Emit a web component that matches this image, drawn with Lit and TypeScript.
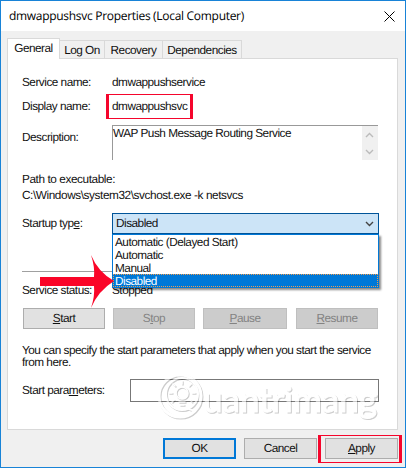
import { LitElement, html, css, svg } from "lit";
import { customElement } from "lit/decorators.js";

@customElement("app-root")
export class AppRoot extends LitElement {
  static styles = css`
    :host { display: block; width: 406px; height: 468px; }
    * { box-sizing: border-box; }
    .window { position: relative; width: 406px; height: 468px; overflow: hidden; display: flex; flex-direction: column;
      border: 1px solid #1883d7; background: #f0f0f0; color: #111;
      font: 11.8px/13px "Liberation Sans", Arial, sans-serif; letter-spacing: -0.5px; text-rendering: geometricPrecision; white-space: nowrap; }
    .title { height: 30px; flex: none; background: #fff; display: flex; justify-content: space-between; align-items: center;
      padding: 0 10px 0 8px; font: 12px/16px "Open Sans", "Noto Sans", sans-serif; letter-spacing: -0.3px; color: #000; }
    .title svg { display: block; }
    .tabs { height: 28px; flex: none; display: flex; align-items: flex-end; padding-left: 6px; margin-bottom: -1px; position: relative; }
    .tab { height: 18px; border: 1px solid #d9d9d9; border-left: 0; border-bottom: 0; text-align: center; line-height: 18px; margin-bottom: 1px; }
    .active { width: 53px; height: 21px; margin: 0; background: #fff; border-left: 1px solid #d9d9d9; line-height: 19px; }
    .logon { width: 45px; } .recovery { width: 58px; } .deps { width: 79px; }
    .pane { margin-left: 6px; width: 391px; height: 372px; flex: none; border: 1px solid #d9d9d9; background: #fff; padding: 11px 14px 0; }
    .row { display: flex; align-items: center; }
    .label { width: 90px; flex: none; }
    .name { height: 24px; }
    .marked { position: relative; }
    .mark { position: absolute; border: solid #f5052c; border-width: 1px 3px; pointer-events: none; }
    .mark-name { left: -6px; top: -6px; width: 87px; height: 25px; }
    .desc { height: 35px; margin-top: 7px; }
    .desc .label { align-self: flex-start; margin-top: 6px; }
    .memo { width: 266px; height: 35px; display: flex; justify-content: space-between; border: solid #999; border-width: 1px 0 0 1px; }
    .memo span { padding-top: 1px; }
    .scroll { width: 16px; background: #f0f0f0; }
    .path { margin-top: 11px; line-height: 16px; letter-spacing: -0.42px; }
    .startup { height: 21px; margin-top: 10px; }
    .combo { position: relative; width: 267px; height: 21px; border: 1px solid #005499; background: #cce4f7; display: flex; align-items: center; justify-content: space-between; padding: 0 4px 0 3px; }
    .list { position: absolute; z-index: 2; left: -1px; top: 20px; width: 267px; height: 54px; background: #fff; border: 1px solid #0078d7; box-shadow: 2px 2px 2px #0007; }
    .item { height: 13px; padding-left: 2px; line-height: 14px; }
    .selected { background: #0078d7; color: #fff; outline: 1px dotted #f09b4c; outline-offset: -1px; }
    .rule { height: 1px; background: #a0a0a0; width: 356px; margin-top: 37px; }
    .status { height: 13px; margin-top: 12px; }
    .buttons { display: flex; margin: 11px 0 0 1px; gap: 8px; }
    .btn { height: 21px; width: 82px; display: flex; align-items: center; justify-content: center; background: #e1e1e1; border: 1px solid #adadad; }
    .off { background: #ccc; border-color: #bfbfbf; color: #838383; }
    .pause { width: 84px; } .resume { margin-left: 1px; }
    .help { margin-top: 15px; line-height: 12px; }
    .params { height: 23px; margin-top: 11px; }
    .params .label { width: 108px; }
    .input { width: 249px; height: 23px; border: 1px solid #777; }
    .footer { display: flex; justify-content: flex-end; gap: 8px; padding: 8px 7px 0 0; }
    .footer .btn { width: 73px; position: relative; }
    .footer .ok { border: 2px solid #0078d7; }
    .mark-apply { left: -8px; top: -4px; width: 84px; height: 28px; }
    .arrow { position: absolute; z-index: 3; left: 39px; top: 254px; }
    .water { position: absolute; left: 149px; top: 365px; opacity: .6; filter: drop-shadow(1px 1px 0.6px #0005); }
    .water text { font: 35px Lato, sans-serif; letter-spacing: 0; }
    u { text-decoration-thickness: 1px; text-underline-offset: 1px; }
  `;

  private chevron(up: boolean, color: string) {
    return svg`<path d=${up ? "M1 6 L4.5 2.5 L8 6" : "M1 2 L4.5 5.5 L8 2"} fill="none" stroke=${color} stroke-width="1.4"/>`;
  }

  render() {
    return html`<div class="window">
      <div class="title"><span>dmwappushsvc Properties (Local Computer)</span>
        <svg width="11" height="11"><path d="M.5 .5 10.5 10.5M10.5 .5 .5 10.5" stroke="#000"/></svg></div>
      <div class="tabs"><div class="tab active">General</div><div class="tab logon">Log On</div><div class="tab recovery">Recovery</div><div class="tab deps">Dependencies</div></div>
      <div class="pane">
        <div class="row name"><span class="label">Service name:</span><span>dmwappushservice</span></div>
        <div class="row name"><span class="label">Display name:</span><span class="marked">dmwappushsvc<i class="mark mark-name"></i></span></div>
        <div class="row desc"><span class="label">Description:</span>
          <div class="memo"><span>WAP Push Message Routing Service</span>
            <svg class="scroll" width="16" height="34"><g transform="translate(3 5)">${this.chevron(true, "#bbb")}</g><g transform="translate(3 22)">${this.chevron(false, "#bbb")}</g></svg></div></div>
        <div class="path">Path to executable:<br>C:\\Windows\\system32\\svchost.exe -k netsvcs</div>
        <div class="row startup"><span class="label">Startup typ<u>e</u>:</span>
          <div class="combo"><span>Disabled</span><svg width="9" height="8">${this.chevron(false, "#444")}</svg>
            <div class="list"><div class="item">Automatic (Delayed Start)</div><div class="item">Automatic</div><div class="item">Manual</div><div class="item selected">Disabled</div></div></div></div>
        <div class="rule"></div>
        <div class="row status"><span class="label">Service status:</span><span>Stopped</span></div>
        <div class="buttons"><div class="btn"><span><u>S</u>tart</span></div><div class="btn off"><span>S<u>t</u>op</span></div><div class="btn off pause"><span><u>P</u>ause</span></div><div class="btn off resume"><span><u>R</u>esume</span></div></div>
        <div class="help">You can specify the start parameters that apply when you start the service<br>from here.</div>
        <div class="row params"><span class="label">Start para<u>m</u>eters:</span><div class="input"></div></div>
      </div>
      <div class="footer"><div class="btn ok">OK</div><div class="btn">Cancel</div><div class="btn"><span><u>A</u>pply</span><i class="mark mark-apply"></i></div></div>
      <svg class="arrow" width="75" height="55"><path d="M0 22H54Q55 12 51 0Q58 17 74 26Q58 36 51 53Q55 41 54 31H0Z" fill="#fa0528"/></svg>
      <svg class="water" width="236" height="62">
        <g fill="none" stroke="#fff" stroke-linecap="round">
          <circle cx="30" cy="30" r="21" stroke-width="3"/><circle cx="32" cy="28" r="16" stroke-width="2"/>
          <circle cx="32" cy="27" r="6" stroke-width="1.5"/>
          <path d="M29 36h6M30 39h4M32 18v-3M25 20l-2-2M39 20l2-2M22 27h-3M42 27h3M24 34l-2 2M40 34l2 2" stroke-width="1.5"/>
          <path d="M37 42q6 4 9 1" stroke-width="2"/>
        </g>
        <text x="53" y="46" textLength="174" fill="#fff" stroke="#fff" stroke-width="1">uantrimang</text>
      </svg>
    </div>`;
  }
}
